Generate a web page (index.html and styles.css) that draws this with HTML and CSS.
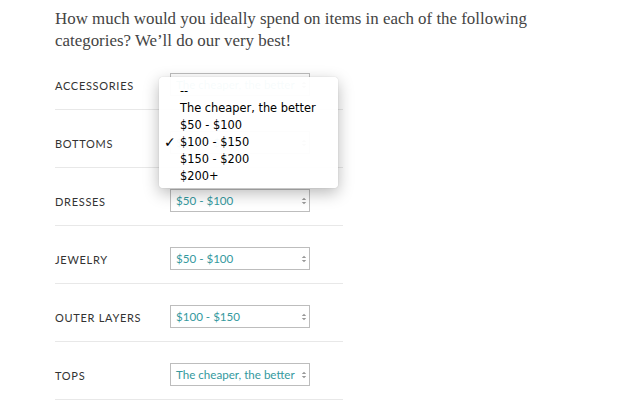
FILE: index.html
```html
<!DOCTYPE html>
<html>
<head>
<meta charset="utf-8">
<link rel="stylesheet" href="styles.css">
</head>
<body>
<div class="page">
  <p class="intro">How much would you ideally spend on items in each of the following categories? We’ll do our very best!</p>
  <div class="rows">
    <div class="row"><span class="label">Accessories</span><div class="select"><span>The cheaper, the better</span><svg class="arrow" width="6" height="8" viewBox="0 0 6 8"><path d="M0.8 3L3 0.8L5.2 3Z M0.8 5L3 7.2L5.2 5Z" fill="#999"/></svg></div></div>
    <div class="row"><span class="label">Bottoms</span><div class="select"><span>$100 - $150</span><svg class="arrow" width="6" height="8" viewBox="0 0 6 8"><path d="M0.8 3L3 0.8L5.2 3Z M0.8 5L3 7.2L5.2 5Z" fill="#999"/></svg></div></div>
    <div class="row"><span class="label">Dresses</span><div class="select"><span>$50 - $100</span><svg class="arrow" width="6" height="8" viewBox="0 0 6 8"><path d="M0.8 3L3 0.8L5.2 3Z M0.8 5L3 7.2L5.2 5Z" fill="#999"/></svg></div></div>
    <div class="row"><span class="label">Jewelry</span><div class="select"><span>$50 - $100</span><svg class="arrow" width="6" height="8" viewBox="0 0 6 8"><path d="M0.8 3L3 0.8L5.2 3Z M0.8 5L3 7.2L5.2 5Z" fill="#999"/></svg></div></div>
    <div class="row"><span class="label">Outer Layers</span><div class="select"><span>$100 - $150</span><svg class="arrow" width="6" height="8" viewBox="0 0 6 8"><path d="M0.8 3L3 0.8L5.2 3Z M0.8 5L3 7.2L5.2 5Z" fill="#999"/></svg></div></div>
    <div class="row"><span class="label">Tops</span><div class="select"><span>The cheaper, the better</span><svg class="arrow" width="6" height="8" viewBox="0 0 6 8"><path d="M0.8 3L3 0.8L5.2 3Z M0.8 5L3 7.2L5.2 5Z" fill="#999"/></svg></div></div>
  </div>
</div>
<ul class="menu">
  <li>--</li>
  <li>The cheaper, the better</li>
  <li>$50 - $100</li>
  <li class="checked">$100 - $150</li>
  <li>$150 - $200</li>
  <li>$200+</li>
</ul>
</body>
</html>
```
FILE: styles.css
```css
html, body {
  margin: 0;
  padding: 0;
  background: #fff;
}
.page {
  padding: 8px 0 0 55px;
  width: 520px;
}
.intro {
  margin: 0;
  font-family: "Liberation Serif", serif;
  font-size: 16.9px;
  line-height: 22px;
  color: #444;
}
.rows {
  width: 288px;
}
.row {
  display: flex;
  align-items: center;
  padding: 21px 0 13px;
  border-bottom: 1px solid #e8e8e8;
}
.label {
  width: 115px;
  padding-top: 2px;
  font-family: Lato, sans-serif;
  font-size: 11px;
  letter-spacing: 0.7px;
  text-transform: uppercase;
  color: #333;
}
.select {
  box-sizing: border-box;
  width: 140px;
  height: 23px;
  border: 1px solid #bdbdbd;
  display: flex;
  align-items: center;
  justify-content: space-between;
  padding: 0 2px 0 5px;
  font-family: Lato, sans-serif;
  font-size: 11.6px;
  color: #35999e;
  white-space: nowrap;
  overflow: hidden;
}
.arrow {
  flex: none;
}
.menu {
  position: absolute;
  left: 159px;
  top: 77px;
  width: 179px;
  box-sizing: border-box;
  margin: 0;
  padding: 6px 0 3px 21px;
  list-style: none;
  background: rgba(255, 255, 255, 0.96);
  border-radius: 4px;
  box-shadow: 0 5px 16px rgba(0, 0, 0, 0.28), 0 0 1px rgba(0, 0, 0, 0.25);
  font-family: "DejaVu Sans", sans-serif;
  font-size: 11.4px;
  line-height: 17px;
  color: #000;
}
.menu li {
  position: relative;
}
.checked::before {
  content: "✓";
  position: absolute;
  left: -16px;
  top: 0;
  font-size: 14px;
  line-height: 17px;
  font-weight: bold;
}
```
